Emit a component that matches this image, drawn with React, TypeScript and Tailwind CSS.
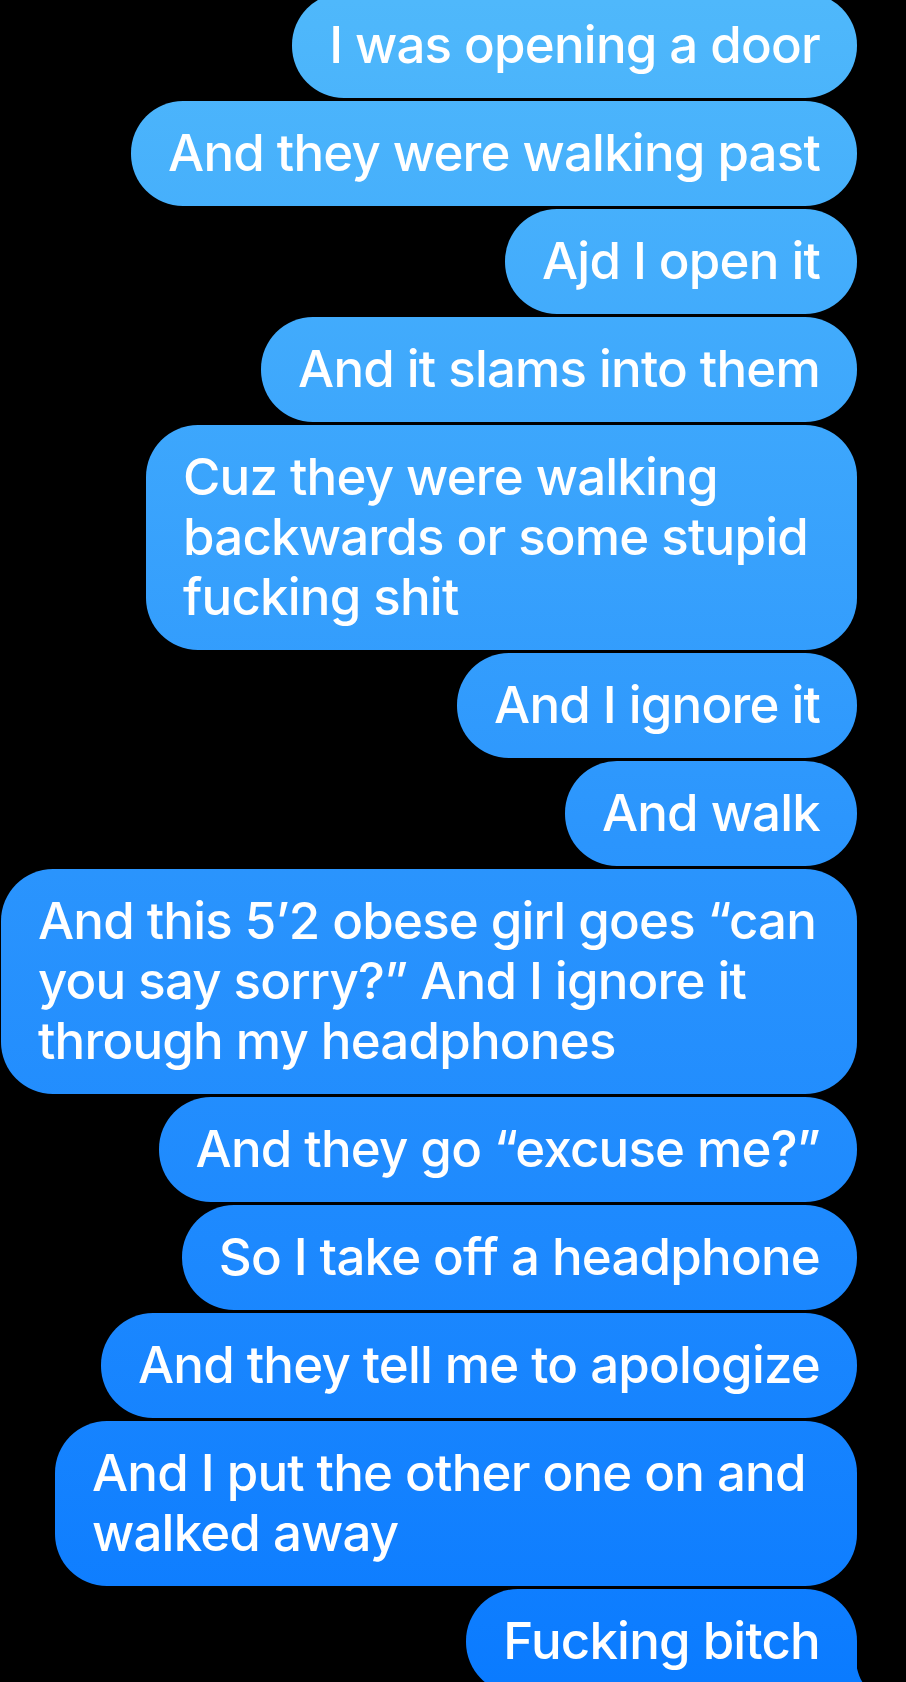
import React from "react";

type Msg = { lines: string[]; w?: string; tail?: boolean };

const msgs: Msg[] = [
  { lines: ["I was opening a door"] },
  { lines: ["And they were walking past"] },
  { lines: ["Ajd I open it"] },
  { lines: ["And it slams into them"] },
  { lines: ["Cuz they were walking", "backwards or some stupid", "fucking shit"], w: "w-[711px]" },
  { lines: ["And I ignore it"] },
  { lines: ["And walk"] },
  { lines: ["And this 5’2 obese girl goes “can", "you say sorry?” And I ignore it", "through my headphones"], w: "w-[856px]" },
  { lines: ["And they go “excuse me?”"] },
  { lines: ["So I take off a headphone"] },
  { lines: ["And they tell me to apologize"] },
  { lines: ["And I put the other one on and", "walked away"], w: "w-[802px]" },
  { lines: ["Fucking bitch"], tail: true },
];

export default function App() {
  return (
    <div className="h-[1682px] w-full overflow-hidden bg-black font-['Inter','Liberation_Sans',sans-serif]">
      <div className="-mt-[7px] flex flex-col items-end gap-[3.3px] pr-[49px]">
        {msgs.map((m, i) => (
          <div
            key={i}
            className={`relative bg-fixed bg-linear-to-b from-[#4fb8fb] via-[#2b95fd] to-[#0a7bff] py-[22.35px] pl-[37px] pr-[37px] text-[51px] leading-[60px] font-medium tracking-[-0.8px] text-white ${
              m.tail ? "rounded-t-[52px] rounded-bl-[52px]" : "rounded-[52px]"
            } ${m.w ?? ""}`}
          >
            {m.lines.map((l, j) => (
              <div key={j} className="whitespace-nowrap">
                {l}
              </div>
            ))}
            {m.tail && (
              <svg
                className="absolute -right-[18px] bottom-0 h-[40px] w-[20px]"
                viewBox="0 0 20 40"
              >
                <path d="M0 0 C1 16 5 30 18 40 L0 40 Z" fill="#0a7bff" />
              </svg>
            )}
          </div>
        ))}
      </div>
    </div>
  );
}
